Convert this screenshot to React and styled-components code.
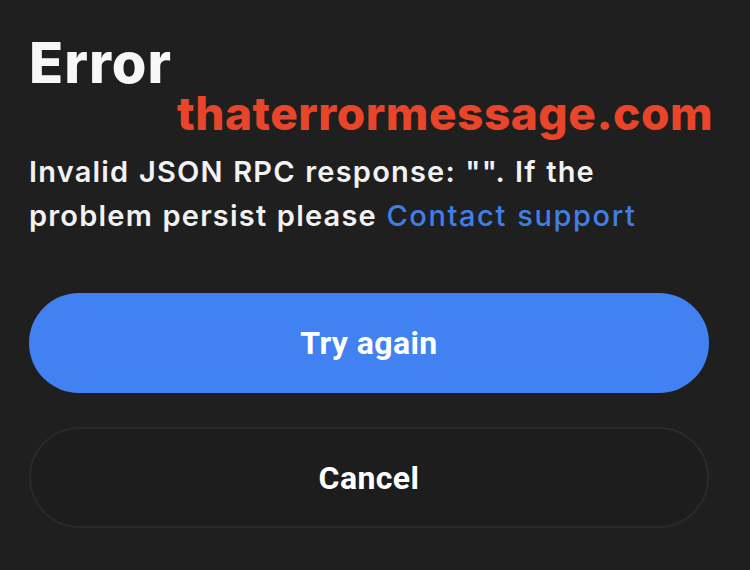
import React from "react";
import styled, { createGlobalStyle } from "styled-components";

const Global = createGlobalStyle`
  html, body { margin: 0; padding: 0; background: #1f1f1f; }
  body { font-family: Inter, "Liberation Sans", sans-serif; }
`;

const Page = styled.div`
  position: relative;
  width: 750px;
  height: 570px;
  box-sizing: border-box;
  padding: 32px 41px 0 29px;
  display: flex;
  flex-direction: column;
  background: #1f1f1f;
  overflow: hidden;
`;

const Title = styled.h1`
  margin: 0;
  font-family: Inter, sans-serif;
  font-weight: 800;
  font-size: 56px;
  line-height: 62px;
  color: #f7f7f7;
  letter-spacing: 1px;
`;

const Watermark = styled.div`
  position: absolute;
  left: 177px;
  top: 86px;
  font-family: Inter, sans-serif;
  font-weight: 800;
  font-size: 46px;
  line-height: 54px;
  color: #e8452a;
  letter-spacing: 0.5px;
`;

const Message = styled.p`
  margin: 56px 0 0 0;
  font-family: Inter, sans-serif;
  font-weight: 600;
  font-size: 29px;
  line-height: 44px;
  color: #f2f2f2;
  letter-spacing: 1.2px;
  word-spacing: 1px;
`;

const Link = styled.span`
  color: #3f7fe6;
  font-weight: 500;
  letter-spacing: 1.6px;
  cursor: pointer;
`;

const Actions = styled.div`
  display: flex;
  flex-direction: column;
  gap: 34px;
  margin-top: 55px;
`;

const Button = styled.button`
  height: ${(p) => (p.$primary ? "100px" : "101px")};
  border-radius: 51px;
  border: ${(p) => (p.$primary ? "none" : "2px solid #2a2a2a")};
  background: ${(p) => (p.$primary ? "#4281f1" : "#1d1d1d")};
  color: #ffffff;
  font-family: Roboto, sans-serif;
  font-weight: 700;
  font-size: 32px;
  letter-spacing: 0.4px;
  display: flex;
  align-items: center;
  justify-content: center;
  padding: 0;
`;

export default function App() {
  return (
    <>
      <Global />
      <Page>
        <Title>Error</Title>
        <Watermark>thaterrormessage.com</Watermark>
        <Message>
          Invalid JSON RPC response: "". If the problem persist please{" "}
          <Link>Contact support</Link>
        </Message>
        <Actions>
          <Button $primary>Try again</Button>
          <Button>Cancel</Button>
        </Actions>
      </Page>
    </>
  );
}
